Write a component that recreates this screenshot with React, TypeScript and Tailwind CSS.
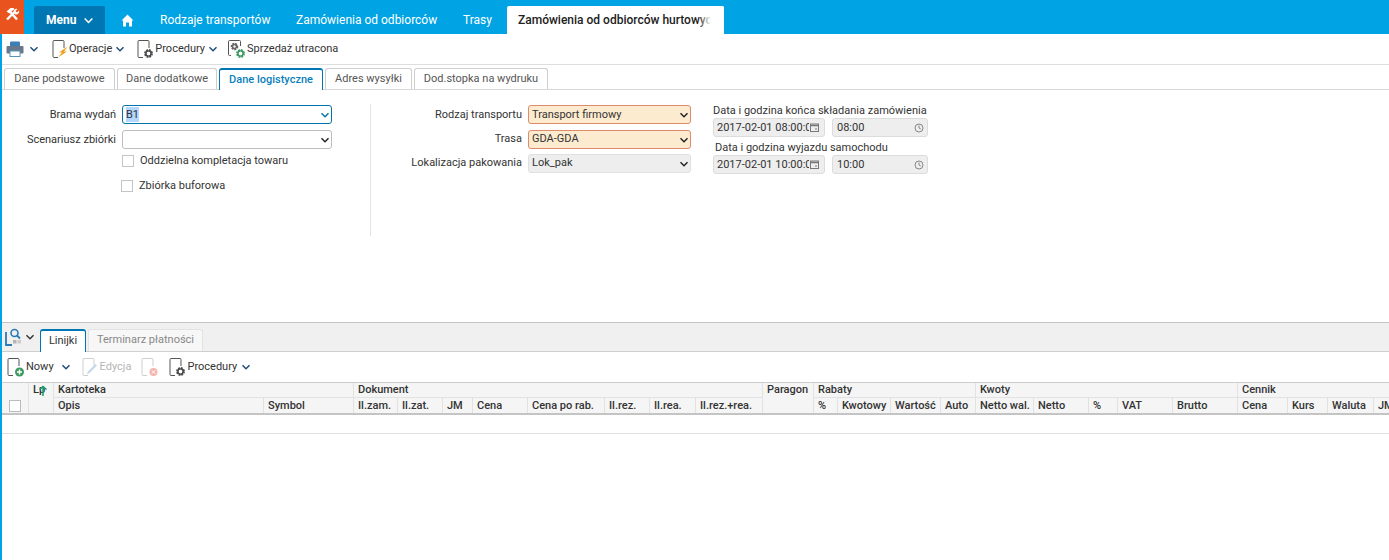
import React from "react";

const Chev = ({ c = "#1d4a78", s = 10 }: { c?: string; s?: number }) => (
  <svg width={s} height={s} viewBox="0 0 10 10" fill="none" stroke={c} strokeWidth="1.4"><path d="M1.500 3.200 5 6.800l3.500-3.600" /></svg>
);

const Doc = ({ children, stroke = "#555555" }: { children?: React.ReactNode; stroke?: string }) => (
  <svg width="20" height="20" viewBox="0 0 20 20" fill="none">
    <path d="M7 18.500H3a1 1 0 0 1-1-1V2.500a1 1 0 0 1 1-1h9a1 1 0 0 1 1 1V9" stroke={stroke} strokeWidth="1" />
    {children}
  </svg>
);

const Gear = ({ x = 12.500, y = 14.500, c = "#4a4a4a", r = 3.200 }: { x?: number; y?: number; c?: string; r?: number }) => (
  <g>
    <circle cx={x} cy={y} r={r} fill="none" stroke={c} strokeWidth="2.400" strokeDasharray="1.700 0.800" />
    <circle cx={x} cy={y} r={r - 0.600} fill="none" stroke={c} strokeWidth="1.300" />
  </g>
);

const Plus = () => (
  <g>
    <circle cx="13.500" cy="15" r="4.500" fill="#3d9a62" />
    <path d="M13.500 12.500v5M11 15h5" stroke="#fff" strokeWidth="1.400" />
  </g>
);

const Sel = ({ value, cls, chev = "#222" }: { value: string; cls: string; chev?: string }) => (
  <div className={`flex items-center justify-between rounded-[3px] border pl-[3px] pr-[1px] text-[11px] text-[#333] ${cls}`}>
    <span>{value}</span>
    <Chev c={chev} />
  </div>
);

const DateBox = ({ d, t }: { d: string; t: string }) => (
  <div className="flex gap-[7px]">
    <div className="flex h-[19px] w-[112px] items-center overflow-hidden rounded-[3px] border border-[#dcdcdc] bg-[#eeeeee] pl-[3px] text-[11px] text-[#333]">
      <span className="w-[92px] shrink-0 overflow-hidden whitespace-nowrap pt-px">{d}</span>
      <svg width="11" height="11" viewBox="0 0 11 11" fill="none" stroke="#777" className="shrink-0"><rect x="1.500" y="2" width="8" height="7.500" /><path d="M1.500 3.500h8" strokeWidth="1.600" /><path d="M6 7h2" /></svg>
    </div>
    <div className="flex h-[19px] w-[96px] items-center justify-between rounded-[3px] border border-[#dcdcdc] bg-[#eeeeee] pl-[4px] pr-[3px] text-[11px] text-[#333]">
      <span className="pt-px">{t}</span>
      <svg width="10" height="10" viewBox="0 0 10 10" fill="none" stroke="#888"><circle cx="5" cy="5" r="4" /><path d="M5 2.500V5l1.800 1" /></svg>
    </div>
  </div>
);

const tabs = [
  { t: "Dane podstawowe", w: "w-[111px]" },
  { t: "Dane dodatkowe", w: "w-[100px]" },
  { t: "Dane logistyczne", w: "w-[104px]", a: true },
  { t: "Adres wysyłki", w: "w-[87px]" },
  { t: "Dod.stopka na wydruku", w: "w-[134px]" },
];

const H = ({ children, cls = "" }: { children?: React.ReactNode; cls?: string }) => (
  <div className={`overflow-hidden whitespace-nowrap border-r border-[#e2e2e2] pl-[4px] text-[11px] font-medium leading-[15px] text-[#333] ${cls}`}>{children}</div>
);

const sub = ["Il.zam.", "Il.zat.", "JM", "Cena", "Cena po rab.", "Il.rez.", "Il.rea.", "Il.rez.+rea."];
const sub2 = ["%", "Kwotowy", "Wartość", "Auto", "Netto wal.", "Netto", "%", "VAT", "Brutto", "Cena", "Kurs", "Waluta", "JM"];

export default function App() {
  return (
    <div className="h-[560px] w-[1389px] overflow-hidden bg-white font-['Roboto',sans-serif] text-[11px] text-[#333]">
      {/* top bar */}
      <div className="flex h-[34px] bg-[#00a3e3]">
        <div className="flex h-[34px] w-[24px] items-start justify-center bg-[#e9531d] pl-[1px] pt-[7px]">
          <svg width="15" height="14" viewBox="0 0 15 14" fill="none">
            <path d="M12 12.500 5 4.500" stroke="#fff" strokeWidth="2.400" />
            <path d="M1.500 4.500 5.500 1h3l1 1-2.500 2-2.500 2.500Z" fill="#fff" />
            <path d="M2 12.500 9 5.500" stroke="#fff" strokeWidth="2.400" />
            <path d="M8.500 5.500a3 3 0 0 1 4-3.500l-2 2 1.500 1.500 2-2a3 3 0 0 1-3.500 4Z" fill="#fff" />
          </svg>
        </div>
        <div className="ml-[10px] mt-[6px] flex h-[28px] w-[71px] items-center gap-[7px] rounded-t-[2px] bg-[#0076b3] pl-[12px] text-[12px] font-bold text-white">
          Menu <Chev c="#ffffff" s={11} />
        </div>
        <div className="flex w-[44px] items-center justify-center pt-[6px]">
          <svg width="13" height="13" viewBox="0 0 13 13" fill="#fff"><path d="M6.500 0.500 12.500 6.500H11V12.500H8V8.500H5V12.500H2V6.500H.5Z" /></svg>
        </div>
        <div className="ml-[11px] flex items-center pt-[6px] text-[12px] text-white">
          <span className="w-[136px]">Rodzaje transportów</span>
          <span className="w-[167px]">Zamówienia od odbiorców</span>
          <span className="w-[44px]">Trasy</span>
        </div>
        <div className="relative mt-[6px] flex h-[28px] w-[217px] items-center overflow-hidden rounded-t-[2px] bg-white pl-[11px] text-[12px] font-medium text-[#222]">
          <span className="whitespace-nowrap">Zamówienia od odbiorców hurtowych</span>
          <div className="absolute right-0 top-0 h-full w-[26px] bg-gradient-to-r from-transparent to-white to-50%" />
        </div>
      </div>

      <div className="h-[526px] border-l-2 border-[#00a3e3]">
        {/* toolbar */}
        <div className="flex h-[31px] items-center border-b border-[#dedede] pl-[3px] text-[11px] text-[#333]">
          <svg width="20" height="18" viewBox="0 0 20 18" fill="none">
            <rect x="5" y="1.500" width="10" height="5" rx="1" fill="#3d7fb5" />
            <rect x="1.500" y="6" width="17" height="7.500" rx="1" fill="#66788a" />
            <rect x="5" y="11" width="10" height="5.500" fill="#fff" stroke="#5c93bd" />
          </svg>
          <span className="ml-[4px]"><Chev /></span>
          <span className="ml-[12px] inline-flex"><Doc><path d="M15 8.500 8 13.500h3l-4 5 9-6h-3l3-4Z" fill="#f0a023" /></Doc></span>
          <span className="ml-[-2px]">Operacje</span>
          <span className="ml-[3px]"><Chev /></span>
          <span className="ml-[11px] inline-flex"><Doc><Gear /></Doc></span>
          <span className="ml-[-1px]">Procedury</span>
          <span className="ml-[3px]"><Chev /></span>
          <span className="ml-[9px] inline-flex">
            <svg width="20" height="20" viewBox="0 0 20 20" fill="none">
              <path d="M4 16.500H2.500a1 1 0 0 1-1-1V2.500a1 1 0 0 1 1-1h10a1 1 0 0 1 1 1V7" stroke="#555" />
              <Gear x={7.500} y={7.500} c="#666" r={2.600} />
              <Gear x={13.500} y={14.500} c="#3d9a62" r={3.200} />
            </svg>
          </span>
          <span>Sprzedaż utracona</span>
        </div>

        {/* tabs */}
        <div className="flex h-[25px] items-end gap-[2px] border-b border-[#d8d8d8] pl-[2px]">
          {tabs.map((x) => (
            <div key={x.t} className={`flex items-center justify-center rounded-t-[3px] border border-b-0 ${x.w} ${x.a ? "relative top-px h-[22px] border-x-[#0076b3] border-t-2 border-t-[#0076b3] bg-white font-medium text-[#0a7fbd]" : "h-[21px] border-[#cfcfcf] text-[#555]"}`}>
              {x.t}
            </div>
          ))}
        </div>

        {/* form */}
        <div className="flex h-[233px] border-b border-[#c4c4c4] pt-[15px]">
          <div className="-mt-px h-[132px] w-[369px] border-r border-[#e3e3e3] pt-px">
            <div className="flex items-center">
              <div className="w-[114px] pt-px text-right">Brama wydań</div>
              <div className="ml-[6px] flex h-[19px] w-[210px] items-center justify-between rounded-[3px] border border-[#0076a8] pl-[3px] pr-[1px]">
                <span className="bg-[#b3d7ff] leading-[15px]">B1</span>
                <Chev c="#0076a8" />
              </div>
            </div>
            <div className="mt-[6px] flex items-center">
              <div className="w-[114px] pt-px text-right">Scenariusz zbiórki</div>
              <Sel value="" cls="ml-[6px] h-[19px] w-[210px] border-[#bdbdbd]" />
            </div>
            <div className="ml-[120px] mt-[6px] flex h-[12px] items-center gap-[6px]">
              <span className="h-[12px] w-[12px] border border-[#c4c4c4]" />
              <span className="pt-px">Oddzielna kompletacja towaru</span>
            </div>
            <div className="ml-[119px] mt-[13px] flex h-[12px] items-center gap-[6px]">
              <span className="h-[12px] w-[12px] border border-[#c4c4c4]" />
              <span className="pt-px">Zbiórka buforowa</span>
            </div>
          </div>
          <div className="w-[151px] text-right">
            <div className="flex h-[19px] items-center justify-end pt-px">Rodzaj transportu</div>
            <div className="mt-[6px] flex h-[19px] items-center justify-end">Trasa</div>
            <div className="mt-[5px] flex h-[19px] items-center justify-end">Lokalizacja pakowania</div>
          </div>
          <div className="ml-[6px] flex w-[163px] flex-col">
            <Sel value="Transport firmowy" cls="h-[19px] border-[#e08a6c] bg-[#fdebcf] pt-px" />
            <Sel value="GDA-GDA" cls="mt-[6px] h-[19px] border-[#e08a6c] bg-[#fdebcf]" />
            <Sel value="Lok_pak" cls="mt-[5px] h-[19px] border-[#e0e0e0] bg-[#eeeeee]" />
          </div>
          <div className="-mt-[1px] ml-[22px] flex flex-col">
            <div className="h-[14px] leading-[14px]">Data i godzina końca składania zamówienia</div>
            <DateBox d="2017-02-01 08:00:00" t="08:00" />
            <div className="ml-[2px] mt-[3px] h-[15px] leading-[16px]">Data i godzina wyjazdu samochodu</div>
            <DateBox d="2017-02-01 10:00:00" t="10:00" />
          </div>
        </div>

        {/* lower tabs */}
        <div className="flex h-[29px] items-end border-b border-[#cfcfcf] bg-[#f0f0f0] pl-[3px]">
          <div className="flex items-center self-center">
            <svg width="18" height="18" viewBox="0 0 18 18" fill="none">
              <path d="M1 4v13h6" stroke="#2a7ab5" strokeWidth="1.800" />
              <circle cx="9.500" cy="5" r="3.500" stroke="#2a7ab5" strokeWidth="1.600" />
              <path d="M12 7.500l3 3" stroke="#2a7ab5" strokeWidth="1.800" />
              <rect x="8" y="12" width="3.500" height="3.500" fill="#b5b5b5" /><rect x="12.500" y="12" width="3.500" height="3.500" fill="#cccccc" />
            </svg>
            <span className="ml-[2px]"><Chev c="#333" /></span>
          </div>
          <div className="relative top-px ml-[5px] flex h-[23px] w-[46px] items-center justify-center rounded-t-[3px] border border-b-0 border-x-[#0076b3] border-t-2 border-t-[#0076b3] bg-white text-[#333]">Linijki</div>
          <div className="ml-[2px] flex h-[22px] w-[115px] items-center justify-center rounded-t-[3px] border border-b-0 border-[#e2e2e2] bg-[#f7f7f7] text-[#888]">Terminarz płatności</div>
        </div>

        {/* lines toolbar */}
        <div className="flex h-[30px] items-center pl-[4px]">
          <span className="inline-flex"><Doc><Plus /></Doc></span>
          <span>Nowy</span>
          <span className="ml-[7px]"><Chev /></span>
          <span className="ml-[10px] inline-flex"><Doc stroke="#cfcfcf"><path d="M14.500 7 7 14.500l-1.500 3 3-1.500L16 8.500Z" fill="#c4d8ec" /></Doc></span>
          <span className="ml-[-1px] text-[#b5b5b5]">Edycja</span>
          <span className="ml-[9px] inline-flex"><Doc stroke="#cfcfcf"><circle cx="13.500" cy="15" r="4" fill="#f2b6ae" /><path d="m11.800 13.300 3.400 3.400m0-3.400-3.400 3.400" stroke="#fff" /></Doc></span>
          <span className="ml-[8px] inline-flex"><Doc><Gear /></Doc></span>
          <span className="ml-[-1px]">Procedury</span>
          <span className="ml-[4px]"><Chev /></span>
        </div>

        {/* table */}
        <div className="overflow-hidden">
          <div className="grid w-[1420px] grid-cols-[27px_25px_210px_90px_44px_45px_30px_55px_77px_45px_46px_67px_51px_24px_53px_50px_35px_58px_55px_29px_55px_65px_50px_40px_46px_46px] grid-rows-[15px_15px] border-t border-[#cdcdcd] bg-[#f5f5f5]">
            <H cls="row-span-2 flex items-end !pl-[7px] pb-[1px]">
              <span className="block h-[12px] w-[12px] border border-[#bbb] bg-white" />
            </H>
            <H cls="relative row-span-2 !leading-[13px] font-bold">
              Lp
              <svg className="absolute left-[9px] top-[2px]" width="10" height="11" viewBox="0 0 10 11" fill="none" stroke="#1f9a6a" strokeWidth="1.500"><path d="M5 11V2M1.500 4.500 5 1.500l3.500 3" /></svg>
            </H>
            <H cls="col-span-2 border-b border-b-[#e2e2e2] !leading-[13px]">Kartoteka</H>
            <H cls="col-span-8 border-b border-b-[#e2e2e2] !leading-[13px]">Dokument</H>
            <H cls="row-span-2 !leading-[13px]">Paragon</H>
            <H cls="col-span-4 border-b border-b-[#e2e2e2] !leading-[13px]">Rabaty</H>
            <H cls="col-span-5 border-b border-b-[#e2e2e2] !leading-[13px]">Kwoty</H>
            <H cls="col-span-4 border-b border-b-[#e2e2e2] !leading-[13px]">Cennik</H>
            <H>Opis</H>
            <H>Symbol</H>
            {sub.map((s, i) => <H key={i}>{s}</H>)}
            {sub2.map((s, i) => <H key={i}>{s}</H>)}
          </div>
          <div className="h-[2px] bg-[#c4c4c4]" />
          <div className="h-[19px] border-b border-[#e0e0e0]" />
        </div>
      </div>
    </div>
  );
}
